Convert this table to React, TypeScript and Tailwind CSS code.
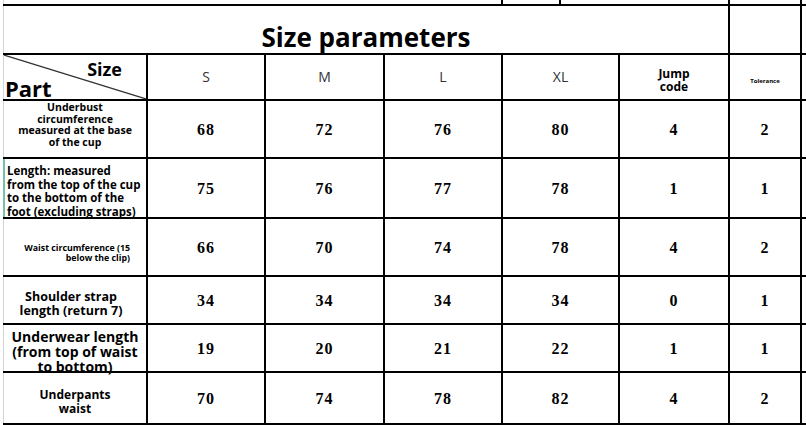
import React from 'react';

type Row = {
  label: React.ReactNode;
  values: string[];
  h: string;
  edge?: string;
};

const cols = ['w-[118px]', 'w-[119px]', 'w-[118px]', 'w-[117px]', 'w-[110px]', 'w-[72px]'];

const sans = { fontFamily: '"Open Sans", "Noto Sans", sans-serif' };
const serif = { fontFamily: '"Liberation Serif", "DejaVu Serif", serif' };

const rows: Row[] = [
  {
    h: 'h-[58px]',
    label: (
      <div className="flex h-full flex-col items-center justify-start pt-[1px] text-center text-[10.5px] font-bold leading-[11.5px]">
        <span>Underbust</span>
        <span>circumference</span>
        <span>measured at the base</span>
        <span>of the cup</span>
      </div>
    ),
    values: ['68', '72', '76', '80', '4', '2'],
  },
  {
    h: 'h-[60px]',
    edge: 'border-l-[2px] border-l-[#73c2ab]',
    label: (
      <div className="flex h-full flex-col justify-center whitespace-nowrap pl-[2px] pt-[6px] text-[11.5px] font-bold leading-[13.5px]">
        <span>Length: measured</span>
        <span>from the top of the cup</span>
        <span>to the bottom of the</span>
        <span>foot (excluding straps)</span>
      </div>
    ),
    values: ['75', '76', '77', '78', '1', '1'],
  },
  {
    h: 'h-[58px]',
    label: (
      <div className="flex h-full flex-col items-end justify-center whitespace-nowrap pr-[16px] pt-[11px] text-right text-[8.8px] font-bold leading-[10px]">
        <span>Waist circumference (15</span>
        <span>below the clip)</span>
      </div>
    ),
    values: ['66', '70', '74', '78', '4', '2'],
  },
  {
    h: 'h-[48px]',
    label: (
      <div className="flex h-full flex-col items-center justify-center pr-[8px] pt-[7px] text-center text-[12.5px] font-bold leading-[14px]">
        <span>Shoulder strap</span>
        <span>length (return 7)</span>
      </div>
    ),
    values: ['34', '34', '34', '34', '0', '1'],
  },
  {
    h: 'h-[48px]',
    label: (
      <div className="flex h-full flex-col items-center justify-start whitespace-nowrap pt-[4px] text-center text-[14px] font-bold leading-[15px]">
        <span>Underwear length</span>
        <span>(from top of waist</span>
        <span>to bottom)</span>
      </div>
    ),
    values: ['19', '20', '21', '22', '1', '1'],
  },
  {
    h: 'h-[52px]',
    label: (
      <div className="flex h-full flex-col items-center justify-center pt-[7px] text-center text-[12px] font-bold leading-[13.5px]">
        <span>Underpants</span>
        <span>waist</span>
      </div>
    ),
    values: ['70', '74', '78', '82', '4', '2'],
  },
];

export default function App() {
  return (
    <div className="h-[425px] w-[806px] overflow-hidden bg-white pl-[3px] text-black" style={sans}>
      {/* top strip */}
      <div className="flex h-[6px] border-b-2 border-black">
        <div className="w-[500px] border-l border-r-2 border-l-gray-300 border-r-black" />
        <div className="w-[58px] border-r-2 border-black" />
        <div className="w-[169px] border-r-2 border-black" />
        <div className="w-[72px] border-r-2 border-black" />
      </div>

      {/* title */}
      <div className="flex h-[49px] border-b-2 border-black">
        <div className="flex w-[727px] items-end justify-center border-l border-r-2 border-l-gray-300 border-r-black">
          <span className="text-[26px] font-bold leading-[32px]">Size parameters</span>
        </div>
        <div className="w-[72px] border-r-2 border-black" />
      </div>

      {/* header */}
      <div className="flex h-[46px] border-b-2 border-black">
        <div className="relative w-[145px] border-l border-r-2 border-l-gray-300 border-r-black">
          <svg className="absolute inset-0 h-full w-full" preserveAspectRatio="none" viewBox="0 0 100 100">
            <line x1="0" y1="0" x2="100" y2="100" stroke="#333" strokeWidth="1.2" vectorEffect="non-scaling-stroke" />
          </svg>
          <span className="absolute right-[24px] top-[2px] text-[18px] font-bold leading-[24px]">Size</span>
          <span className="absolute bottom-[-3px] left-[1px] text-[22px] font-bold leading-[28px]">Part</span>
        </div>
        {['S', 'M', 'L', 'XL'].map((s, i) => (
          <div key={s} className={`${cols[i]} flex items-center justify-center border-r-2 border-black pb-[1px] text-[14px] text-[#333]`}>
            {s}
          </div>
        ))}
        <div className="flex w-[110px] flex-col items-center justify-center border-r-2 border-black pt-[6px] text-[12px] font-bold leading-[13px]">
          <span>Jump</span>
          <span>code</span>
        </div>
        <div className="flex w-[72px] items-center justify-center border-r-2 border-black pt-[8px] text-[6px] font-bold leading-[8px]">
          <span>Tolerance</span>
        </div>
      </div>

      {rows.map((r, ri) => (
        <div key={ri} className={`flex ${r.h} border-b-2 border-black`}>
          <div className={`w-[145px] overflow-visible border-r-2 border-r-black ${r.edge ?? 'border-l border-l-gray-300'}`}>
            {r.label}
          </div>
          {r.values.map((v, i) => (
            <div
              key={i}
              className={`${cols[i]} flex items-center justify-center border-r-2 border-black pt-[2px] text-[16px] font-bold tracking-[1px]`}
              style={serif}
            >
              {v}
            </div>
          ))}
        </div>
      ))}
    </div>
  );
}
